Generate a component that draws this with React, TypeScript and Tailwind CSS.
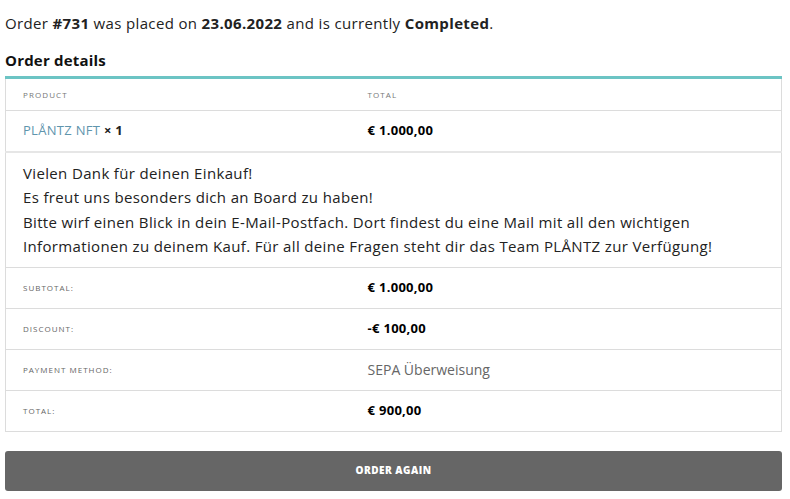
import React from 'react';

const font = { fontFamily: '"Open Sans", "Liberation Sans", sans-serif' };

const totals = [
  { label: 'Subtotal:', value: '€ 1.000,00', bold: true },
  { label: 'Discount:', value: '-€ 100,00', bold: true },
  { label: 'Payment method:', value: 'SEPA Überweisung', bold: false },
  { label: 'Total:', value: '€ 900,00', bold: true },
];

export default function App() {
  return (
    <div className="min-h-screen bg-white px-[5px] pt-[11px] text-[#222]" style={font}>
      <p className="text-[15px] leading-6 tracking-[0.35px]">
        Order <b className="font-bold">#731</b> was placed on <b className="font-bold">23.06.2022</b> and is currently{' '}
        <b className="font-bold">Completed</b>.
      </p>

      <h2 className="mt-[13px] text-[15px] font-bold leading-6 tracking-[0.2px] text-[#111]">Order details</h2>

      <table className="mt-[4px] w-[777px] border-collapse border-t-[3px] border-t-[#6cc4c4]">
        <thead>
          <tr className="h-[33px] border-x border-b border-[#dcdcdc]">
            <th className="w-[362px] pl-[17px] text-left text-[8px] font-normal uppercase tracking-[1.1px] text-[#777]">
              Product
            </th>
            <th className="pl-0 text-left text-[8px] font-normal uppercase tracking-[1.1px] text-[#777]">Total</th>
          </tr>
        </thead>
        <tbody>
          <tr className="h-[41px] border-x border-b-2 border-x-[#dcdcdc] border-b-[#e6e6e6]">
            <td className="pl-[17px] text-[13px] tracking-[0.3px]">
              <span className="text-[#5f95ad]">PLÅNTZ NFT</span> <b className="font-bold">× 1</b>
            </td>
            <td className="text-[13px] font-bold tracking-[0.3px] text-black">€ 1.000,00</td>
          </tr>
          <tr className="border-x border-b border-[#dcdcdc]">
            <td
              colSpan={2}
              className="px-[17px] pb-[8px] pt-[8px] text-[15px] leading-[24.5px] tracking-[0.35px] text-[#222]"
            >
              Vielen Dank für deinen Einkauf!
              <br />
              Es freut uns besonders dich an Board zu haben!
              <br />
              Bitte wirf einen Blick in dein E-Mail-Postfach. Dort findest du eine Mail mit all den wichtigen
              <br />
              Informationen zu deinem Kauf. Für all deine Fragen steht dir das Team PLÅNTZ zur Verfügung!
            </td>
          </tr>
        </tbody>
        <tfoot>
          {totals.map((t) => (
            <tr key={t.label} className="h-[41px] border-x border-b border-[#dcdcdc]">
              <th className="pl-[17px] text-left text-[8px] font-normal uppercase tracking-[1px] text-[#666]">
                {t.label}
              </th>
              <td
                className={
                  t.bold
                    ? 'text-[13px] font-bold tracking-[0.3px] text-black'
                    : 'text-[14px] font-normal text-[#666]'
                }
              >
                {t.value}
              </td>
            </tr>
          ))}
        </tfoot>
      </table>

      <button className="mt-[19px] flex h-[40px] w-[777px] items-center justify-center rounded-[3px] bg-[#666] text-[10px] font-extrabold uppercase tracking-[0.5px] text-white">
        Order again
      </button>
    </div>
  );
}
